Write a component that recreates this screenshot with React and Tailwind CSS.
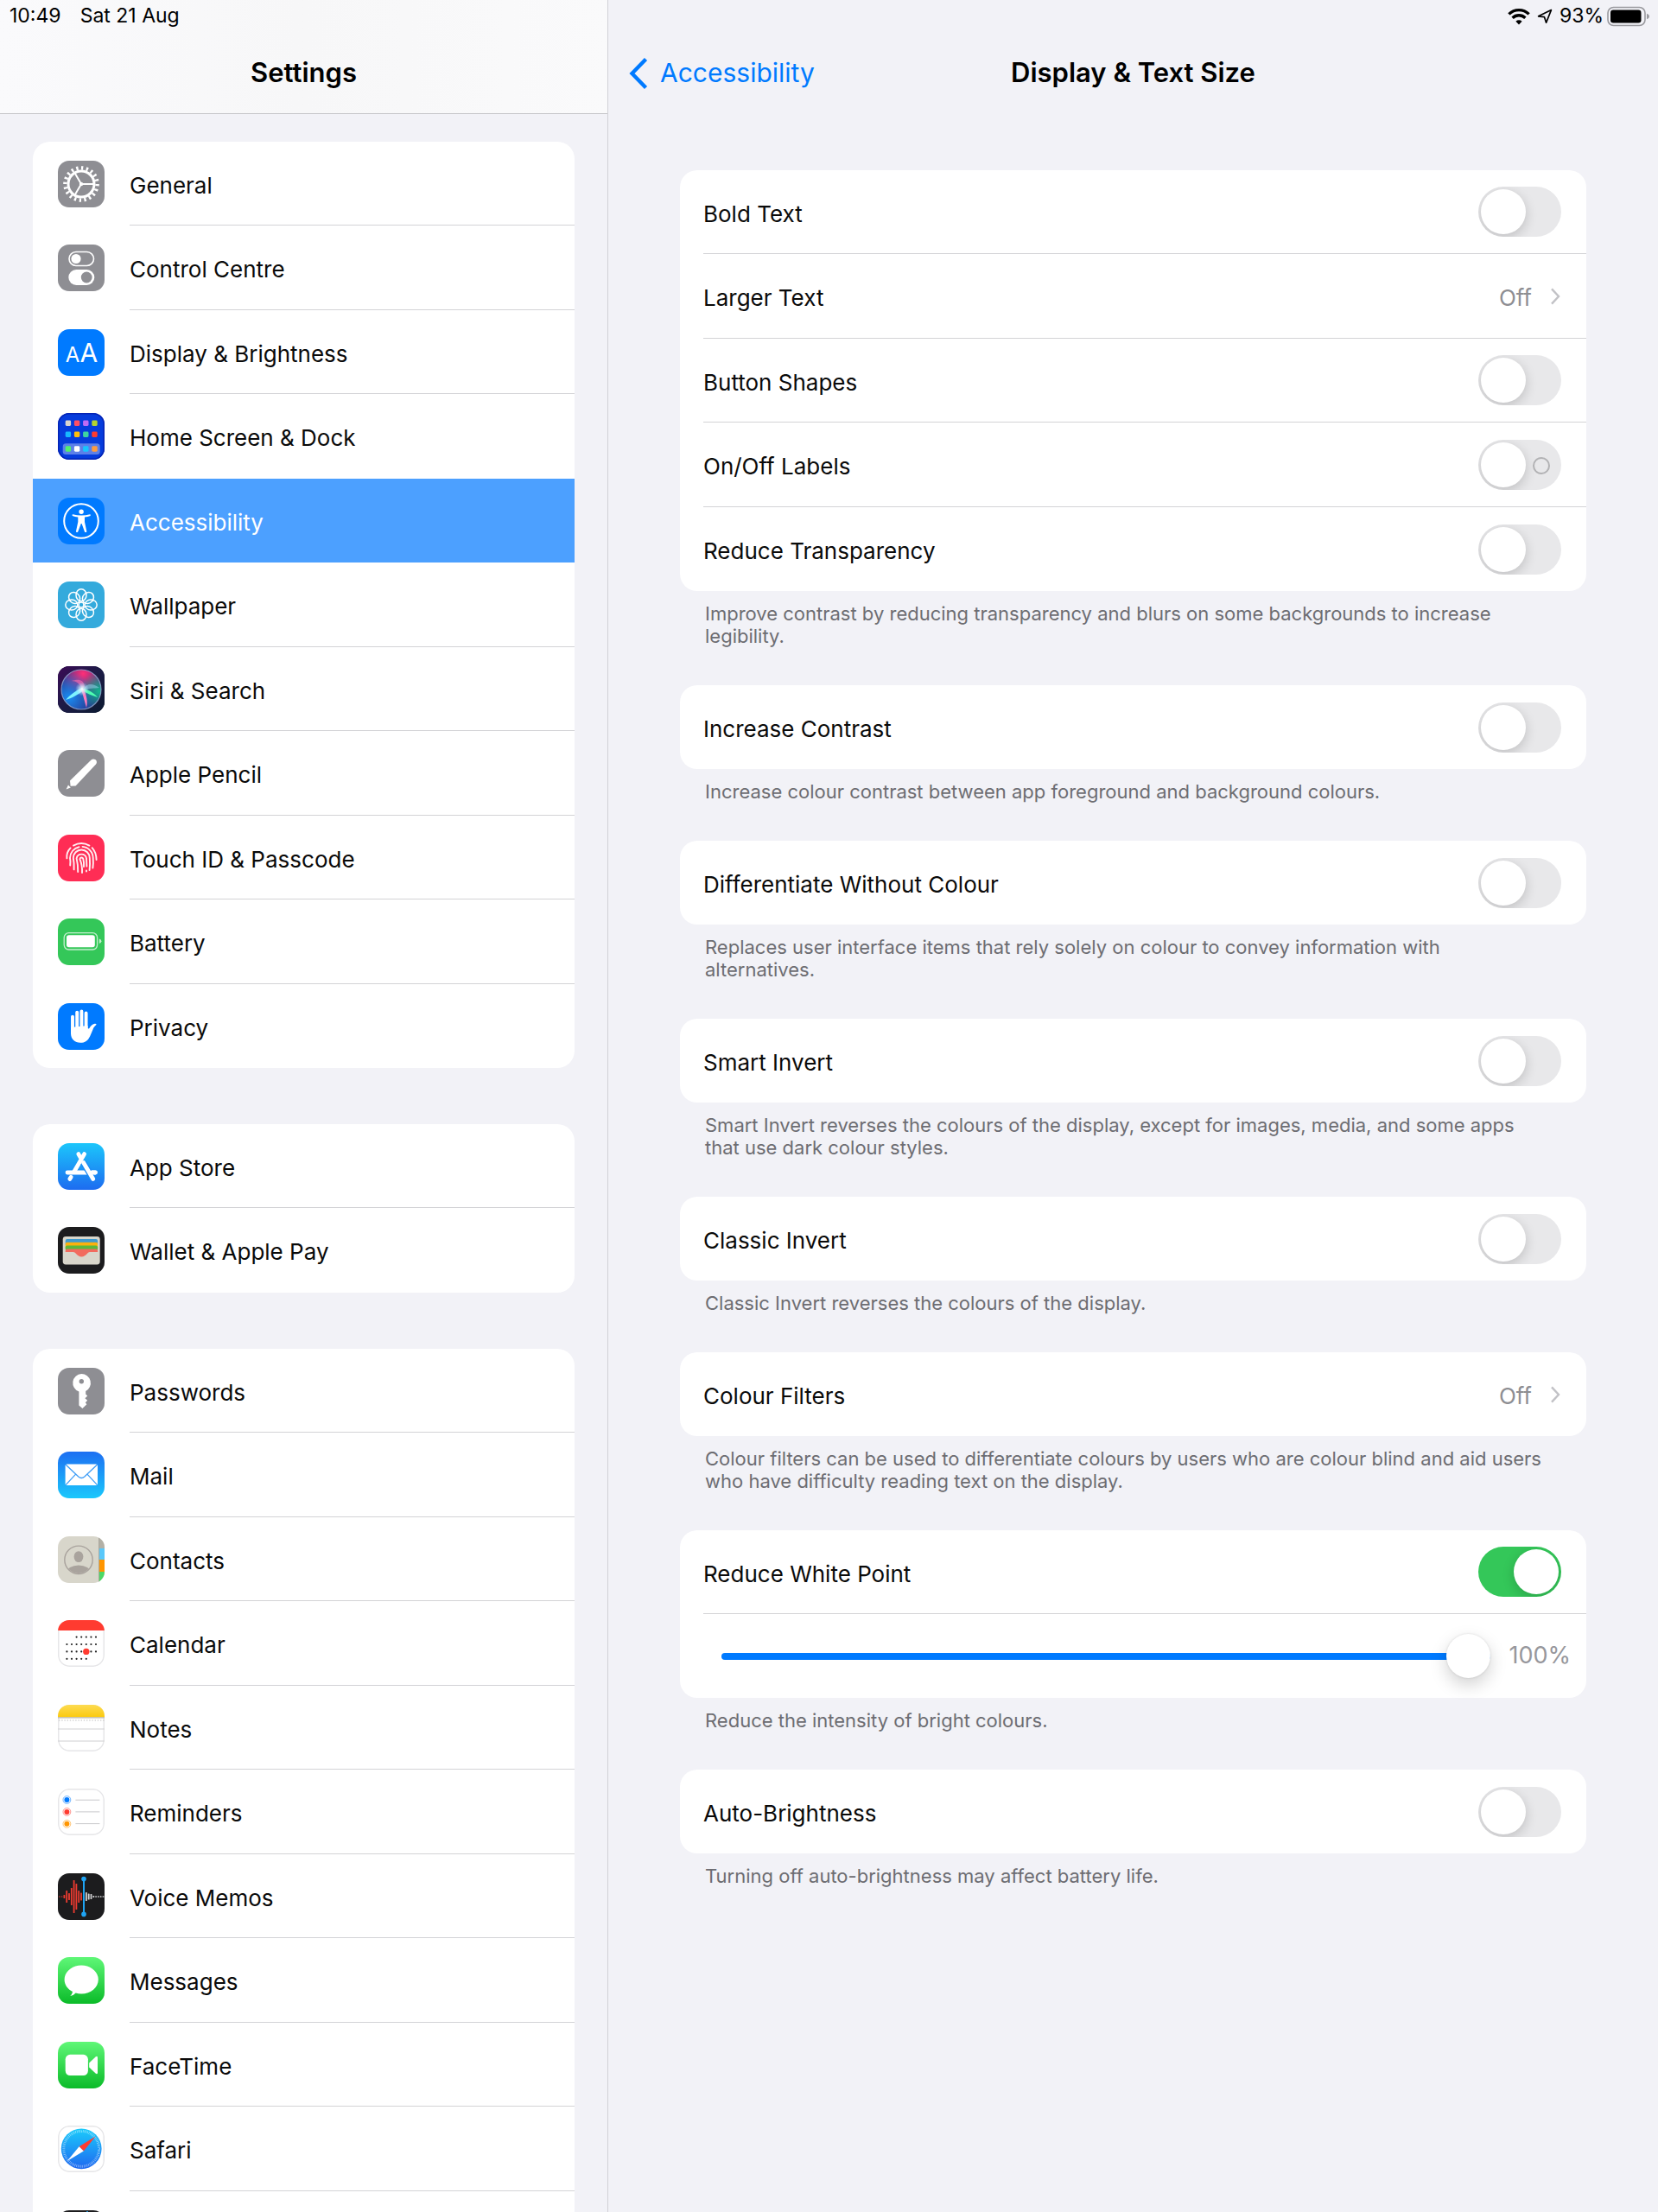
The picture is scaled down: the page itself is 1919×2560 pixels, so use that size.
import React, { useState } from "react";

/* ---------- icons ---------- */

const IconTile = ({ className = "", children }) => (
  <svg
    viewBox="0 0 54 54"
    aria-hidden="true"
    className={`size-[54px] shrink-0 rounded-[13px] ${className}`}
  >
    {children}
  </svg>
);

const Gradient = ({ id, from, to }) => (
  <defs>
    <linearGradient id={id} x1="0" y1="0" x2="0" y2="1">
      <stop offset="0" stopColor={from} />
      <stop offset="1" stopColor={to} />
    </linearGradient>
  </defs>
);

const TileBorder = () => (
  <rect x="0.75" y="0.75" width="52.5" height="52.5" rx="12.5" fill="none" stroke="#e6e6e8" strokeWidth="1.5" />
);

const GeneralIcon = () => (
  <IconTile className="bg-[#8e8e93]">
    <g fill="none" stroke="#fff">
      <circle cx="27" cy="27" r="18.6" strokeWidth="4.4" pathLength="40" strokeDasharray="0.8 1.2" />
      <circle cx="27" cy="27" r="15" strokeWidth="3" />
      <path d="M27 27H41M27 27L20 15M27 27L20 39" strokeWidth="2" />
    </g>
    <circle cx="27" cy="27" r="2.2" fill="#fff" />
  </IconTile>
);

const ControlCentreIcon = () => (
  <IconTile className="bg-[#8e8e93]">
    <rect x="13" y="8.5" width="28.5" height="16" rx="8" fill="none" stroke="#fff" strokeWidth="1.6" />
    <circle cx="21" cy="16.5" r="5.6" fill="#fff" />
    <rect x="12.3" y="29" width="30" height="18" rx="9" fill="#fff" />
    <circle cx="33.2" cy="38" r="6.4" fill="#8e8e93" />
  </IconTile>
);

const DisplayIcon = () => (
  <IconTile className="bg-[#007aff]">
    <g fill="#fff" fontFamily="Inter, sans-serif" fontWeight="400">
      <text x="8.8" y="38.3" fontSize="24">A</text>
      <text x="25.5" y="38.3" fontSize="30">A</text>
    </g>
  </IconTile>
);

const homeSquares = [
  ["#d9d5ce", "#ff4f64", "#bf6bf5", "#b4d32f"],
  ["#17b8ff", "#ffbf0a", "#3fd4a0", "#ff3b30"],
  ["#52f06c", "#ffffff", "#17c4ff", "#ff9c3f"],
];

const HomeScreenIcon = () => (
  <IconTile className="bg-[#063cdc]">
    <rect width="54" height="54" rx="13" fill="none" stroke="#0523b4" strokeWidth="3" />
    <rect x="5.7" y="35.3" width="43" height="12.6" rx="3.5" fill="#fff" fillOpacity="0.35" />
    {homeSquares.map((row, r) =>
      row.map((color, c) => (
        <rect key={color} x={8.7 + c * 10.2} y={[8.5, 21.5, 38.3][r]} width="6.4" height="6.4" rx="1.4" fill={color} />
      ))
    )}
  </IconTile>
);

const AccessibilityIcon = () => (
  <IconTile className="bg-[#007aff]">
    <circle cx="27" cy="27" r="19.8" fill="none" stroke="#fff" strokeWidth="2" />
    <circle cx="27.1" cy="16.2" r="2.7" fill="#fff" />
    <path
      d="M17.3 19.3Q22 20.6 27.2 20.6T37.1 19.3Q38.3 19.3 37.6 20.9 34.6 22.1 31 22.6V28L33.4 39.2Q32.2 40.8 31 39.5L27.6 30H26.8L23.2 39.5Q22 40.8 20.9 39.2L23.3 28V22.6Q19.8 22.1 16.8 20.9 16.1 19.3 17.3 19.3Z"
      fill="#fff"
    />
  </IconTile>
);

const WallpaperIcon = () => (
  <IconTile className="bg-[#34aadc]">
    <g fill="none" stroke="#fff" strokeWidth="1.5">
      {[0, 45, 90, 135, 180, 225, 270, 315].map((deg) => (
        <ellipse key={deg} cx="27" cy="15.8" rx="6" ry="7" transform={`rotate(${deg} 27 27)`} />
      ))}
      <circle cx="27" cy="27" r="3" />
    </g>
  </IconTile>
);

const SiriIcon = () => (
  <IconTile className="bg-[#151a3a]">
    <defs>
      <linearGradient id="siri-bg" x1="0" y1="0" x2="1" y2="1">
        <stop offset="0" stopColor="#3b0a55" />
        <stop offset="0.5" stopColor="#1c1b46" />
        <stop offset="1" stopColor="#0b1a30" />
      </linearGradient>
      <radialGradient id="siri-pink" cx="0.55" cy="0.1" r="0.6">
        <stop offset="0" stopColor="#ff2f78" />
        <stop offset="1" stopColor="#ff2f78" stopOpacity="0" />
      </radialGradient>
      <radialGradient id="siri-blue" cx="0.2" cy="0.7" r="0.65">
        <stop offset="0" stopColor="#1a8df2" />
        <stop offset="1" stopColor="#1a8df2" stopOpacity="0" />
      </radialGradient>
      <radialGradient id="siri-green" cx="0.95" cy="0.55" r="0.5">
        <stop offset="0" stopColor="#12b78c" />
        <stop offset="1" stopColor="#12b78c" stopOpacity="0" />
      </radialGradient>
      <radialGradient id="siri-core">
        <stop offset="0" stopColor="#fff" />
        <stop offset="0.4" stopColor="#d8f4ff" stopOpacity="0.7" />
        <stop offset="1" stopColor="#9fdcff" stopOpacity="0" />
      </radialGradient>
    </defs>
    <rect width="54" height="54" fill="url(#siri-bg)" />
    <circle cx="27" cy="27" r="23" fill="#2a2c86" />
    <circle cx="27" cy="27" r="23" fill="url(#siri-pink)" />
    <circle cx="27" cy="27" r="23" fill="url(#siri-blue)" />
    <circle cx="27" cy="27" r="23" fill="url(#siri-green)" />
    <circle cx="27" cy="27" r="23" fill="none" stroke="#9bb0d8" strokeOpacity="0.75" strokeWidth="1.2" />
    <path d="M28 26C25 20 21 17 16 17C22 15 30 14 31 24Z" fill="#ff6fb0" fillOpacity="0.6" />
    <path d="M30 26C33 20 40 19 48 25C42 26 36 25 30 28Z" fill="#8fd0e8" fillOpacity="0.55" />
    <path d="M28 25C21 28 14 33 9 39C17 37 24 32 30 28Z" fill="#7df3ff" />
    <path d="M29 26C35 27 42 31 46 36C39 34 33 31 28 28Z" fill="#4dffb0" />
    <path d="M27 27C29 33 31 41 33 48C35 41 33 33 30 27Z" fill="#ff7cc0" />
    <circle cx="28" cy="26.5" r="8" fill="url(#siri-core)" />
  </IconTile>
);

const PencilIcon = () => (
  <IconTile className="bg-[#8e8e93]">
    <path d="M38.5 11.6C42 8.7 47 12.6 44 16.6L20.6 41.4 14.6 41.8 14 35.6Z" fill="#fff" />
    <path d="M12 40.4L14.8 43.4 9.6 45.4Z" fill="#fff" />
  </IconTile>
);

const TouchIdIcon = () => (
  <IconTile className="bg-[#ff2d55]">
    <g fill="none" stroke="#fff" strokeWidth="1.9" strokeLinecap="round" strokeOpacity="0.92">
      <path d="M18 12.6Q27.2 7.4 36.4 12.6" />
      <path d="M14.6 15.4Q9.6 20.4 10.4 27.4" />
      <path d="M39.6 15.2Q44.4 20.4 44.6 29" />
      <path d="M14.2 35.5Q14.8 31 14 27A13.2 13.2 0 0 1 24.5 14.2" />
      <path d="M28.5 13.9A13.2 13.2 0 0 1 40.7 27Q41.2 33 40.4 38.6" />
      <path d="M18.6 40.4Q19 33 17.8 27A9.5 9.5 0 0 1 36.8 27Q37.4 34 36.6 41" />
      <path d="M23.2 43Q23.4 35 21.6 27.4A5.8 5.8 0 0 1 33 27.4L33.4 36.6M33 41.4V42.6" />
      <path d="M28 44Q28.4 35 25.4 28.4A2 2 0 0 1 29.2 27.6Q30.4 32 30 37" />
    </g>
  </IconTile>
);

const BatteryTileIcon = () => (
  <IconTile className="bg-[#34c759]">
    <rect x="7.2" y="16.6" width="38.4" height="19.4" rx="5.4" fill="none" stroke="#fff" strokeOpacity="0.7" strokeWidth="1.3" />
    <rect x="10" y="19.3" width="32.8" height="14" rx="2.8" fill="#fff" />
    <path d="M47.8 23.6Q50.4 24.4 50.4 26.3T47.8 29Z" fill="#fff" fillOpacity="0.7" />
  </IconTile>
);

const PrivacyIcon = () => (
  <IconTile className="bg-[#007aff]">
    <g stroke="#fff" strokeWidth="3.9" strokeLinecap="round">
      <path d="M17 15.6V34M22.2 10.6V30M27.4 9.4V30M32.6 11.4V32" />
    </g>
    <path
      d="M15 28V35C15 41.5 19.5 45.8 26 45.8 31.5 45.8 34.6 43.5 37.2 38.2L40.6 30.2C41.6 27.9 42.4 26.8 43.9 25.6 45.2 24.5 44.3 23.4 42.7 23.7 39.5 24.2 37.8 26.7 36.4 28.9 35.9 29.7 34.6 29.5 34.6 28.4V26Z"
      fill="#fff"
    />
  </IconTile>
);

const AppStoreIcon = () => (
  <IconTile>
    <Gradient id="appstore-bg" from="#1cc6fb" to="#1d6cf0" />
    <rect width="54" height="54" fill="url(#appstore-bg)" />
    <g fill="none" stroke="#fff" strokeWidth="4.8" strokeLinecap="round">
      <path d="M11 34H43.4" />
      <path d="M30.6 12.6L18.8 33" />
      <path d="M23.8 12.6L26 16.4" />
      <path d="M15.2 39.2L13.8 41.4" />
      <path d="M29.6 22.6L41 42" stroke="#1d8bf5" strokeWidth="7.4" strokeLinecap="butt" />
      <path d="M29.6 22.6L40.8 41.4" />
      <path d="M39.4 34H43.4" />
    </g>
  </IconTile>
);

const WalletIcon = () => (
  <IconTile className="bg-[#1c1c1e]">
    <rect x="5.7" y="11" width="43" height="32.4" rx="3.4" fill="#d9d6cb" />
    <rect x="8.7" y="14" width="37.4" height="8" rx="2" fill="#3f9bd0" />
    <rect x="8.7" y="17.8" width="37.4" height="8" rx="2" fill="#fcb10d" />
    <rect x="8.7" y="21.6" width="37.4" height="6" rx="2" fill="#5cb83b" />
    <path d="M8.7 27.4Q8.7 25.4 10.7 25.4H44.1Q46.1 25.4 46.1 27.4V29H37C34 29 32.6 34.4 27.4 34.4S21 29 17.6 29H8.7Z" fill="#f26b5e" />
  </IconTile>
);

const KeyIcon = () => (
  <IconTile className="bg-[#8e8e93]">
    <path
      fillRule="evenodd"
      d="M27.3 7A10.6 10.6 0 0 1 32.2 27V30.4L34.2 32.6 31.4 35.2 34.2 37.8 31.8 40.2 33.4 42.2 28.4 47 24.4 43.4V27.6A10.6 10.6 0 0 1 27.3 7ZM27.3 13A2.7 2.7 0 1 0 27.3 18.4 2.7 2.7 0 1 0 27.3 13Z"
      fill="#fff"
    />
  </IconTile>
);

const MailIcon = () => (
  <IconTile>
    <Gradient id="mail-bg" from="#1d6ff2" to="#1ac8fc" />
    <rect width="54" height="54" fill="url(#mail-bg)" />
    <rect x="8.6" y="14.4" width="37.4" height="24.6" rx="1.8" fill="#fff" />
    <path d="M9 15L23.8 29Q27.3 32 30.8 29L45.6 15M9 38.6L20.4 26.4M45.6 38.6L34.2 26.4" fill="none" stroke="#3f9df6" strokeWidth="1.3" />
  </IconTile>
);

const ContactsIcon = () => (
  <IconTile className="bg-[#d8d6cb]">
    <rect x="47.6" width="6.4" height="14" fill="#b3b0a6" />
    <rect x="47.6" y="14" width="6.4" height="13" fill="#5ac8fa" />
    <rect x="47.6" y="27" width="6.4" height="14" fill="#ff9500" />
    <rect x="47.6" y="41" width="6.4" height="13" fill="#4cd964" />
    <path d="M47.6 0V54" stroke="#a09d94" strokeWidth="0.8" />
    <clipPath id="contact-clip">
      <circle cx="24" cy="27.3" r="15.6" />
    </clipPath>
    <g fill="#a9a39d">
      <ellipse cx="24" cy="23.6" rx="5.4" ry="6.4" />
      <ellipse cx="24" cy="42" rx="14" ry="8.6" clipPath="url(#contact-clip)" />
    </g>
    <circle cx="24" cy="27.3" r="16.2" fill="none" stroke="#a9a39d" strokeWidth="1.4" />
  </IconTile>
);

const calendarRows = [
  [2, 3, 4, 5, 6],
  [0, 1, 2, 3, 4, 5, 6],
  [0, 1, 2, 3, 4, 5, 6],
  [0, 1, 2, 3, 4],
];

const CalendarIcon = () => (
  <IconTile className="bg-white">
    <TileBorder />
    <rect width="54" height="12" fill="#ff3b30" />
    {calendarRows.map((cols, r) =>
      cols.map((c) => <circle key={`${r}-${c}`} cx={10.4 + c * 5.6} cy={19.6 + r * 8.4} r="1.1" fill="#222" />)
    )}
    <circle cx="32.8" cy="36.4" r="3.7" fill="#ff3b30" />
  </IconTile>
);

const NotesIcon = () => (
  <IconTile className="bg-white">
    <Gradient id="notes-top" from="#fddb52" to="#fbca0f" />
    <TileBorder />
    <rect width="54" height="14.2" fill="url(#notes-top)" />
    <path d="M0 14.8H54" stroke="#b8b49f" strokeWidth="1.2" />
    <path d="M1 18H54" stroke="#bdbdbd" strokeWidth="1" strokeDasharray="1.4 1.8" />
    <path d="M0 28H54M0 42H54" stroke="#cfcfd1" strokeWidth="1.2" />
  </IconTile>
);

const RemindersIcon = () => (
  <IconTile className="bg-white">
    <TileBorder />
    {["#007aff", "#ff3b30", "#ff9500"].map((color, i) => (
      <g key={color}>
        <circle cx="10.4" cy={13 + i * 13.9} r="3" fill={color} />
        <circle cx="10.4" cy={13 + i * 13.9} r="4.4" fill="none" stroke={color} strokeOpacity="0.7" strokeWidth="0.8" />
        <path d={`M20.4 ${13.2 + i * 13.7}H48.4`} stroke="#c9c9cc" strokeWidth="1" />
      </g>
    ))}
  </IconTile>
);

const waveBars = [1, 1, 4, 14, 8, 20, 38, 30, 14, 9];
const quietBars = [10, 7, 6, 2, 1.5, 1.5, 1.5, 1.5];

const VoiceMemosIcon = () => (
  <IconTile className="bg-[#1c1c1e]">
    {waveBars.map((h, i) => (
      <rect key={i} x={0.9 + i * 2.8} y={27 - h / 2} width="1.8" height={h} rx="0.6" fill="#ed3b30" />
    ))}
    {quietBars.map((h, i) => (
      <rect key={i} x={32 + i * 2.8} y={27 - h / 2} width="1.8" height={h} rx="0.6" fill="#d0d0d2" />
    ))}
    <path d="M30 6.6V47.4" stroke="#1fa4f4" strokeWidth="2" />
    <circle cx="30" cy="6.6" r="2.8" fill="#1fa4f4" />
    <circle cx="30" cy="47.4" r="2.8" fill="#1fa4f4" />
  </IconTile>
);

const MessagesIcon = () => (
  <IconTile>
    <Gradient id="messages-bg" from="#5ff777" to="#0bbb29" />
    <rect width="54" height="54" fill="url(#messages-bg)" />
    <path
      d="M27.2 9.4C38 9.4 46.8 16.7 46.8 25.9S38 42.4 27.2 42.4C24.8 42.4 22.6 42.1 20.6 41.5 18.8 43.5 16.6 44.7 14.2 45 15.8 43.6 16.8 41.6 17 39.9 11.2 37 7.6 31.8 7.6 25.9 7.6 16.7 16.4 9.4 27.2 9.4Z"
      fill="#fff"
    />
  </IconTile>
);

const FaceTimeIcon = () => (
  <IconTile>
    <Gradient id="facetime-bg" from="#5ff777" to="#0bbb29" />
    <rect width="54" height="54" fill="url(#facetime-bg)" />
    <rect x="8.7" y="14.8" width="26.2" height="24.2" rx="5.4" fill="#fff" />
    <path d="M36.2 24.4L43.6 17.4Q46 15.8 46 18.4V35.6Q46 38.2 43.6 36.6L36.2 29.6Z" fill="#fff" />
  </IconTile>
);

const SafariIcon = () => (
  <IconTile className="bg-white">
    <Gradient id="safari-bg" from="#1bcbfb" to="#1e68f0" />
    <TileBorder />
    <circle cx="27.2" cy="26.8" r="23.4" fill="url(#safari-bg)" />
    <circle cx="27.2" cy="26.8" r="20.4" fill="none" stroke="#fff" strokeOpacity="0.6" strokeWidth="3" pathLength="144" strokeDasharray="0.7 1.3" />
    <path d="M43.6 12.6L24.6 24.2 29.8 29.4Z" fill="#ff3b30" />
    <path d="M10.8 41L24.6 24.2 29.8 29.4Z" fill="#fff" />
  </IconTile>
);

const StocksIcon = () => (
  <IconTile className="bg-[#1c1c1e]">
    <path d="M4 40L14 30 22 35 32 20 40 26 50 14" fill="none" stroke="#fff" strokeWidth="2" />
    <path d="M34 1V53" stroke="#1fa4f4" strokeWidth="1.6" />
  </IconTile>
);

const WifiIcon = () => (
  <svg viewBox="0 0 26 20" aria-hidden="true" className="h-5 w-[26px]">
    <g fill="none" stroke="#000" strokeWidth="3.4">
      <path d="M1.4 7.4A16.6 16.6 0 0 1 24.6 7.4" />
      <path d="M5.6 11.8A10.6 10.6 0 0 1 20.4 11.8" />
    </g>
    <path d="M13 19.4L9.4 15.8A5.2 5.2 0 0 1 16.6 15.8Z" />
  </svg>
);

const LocationIcon = () => (
  <svg viewBox="0 0 18 18" aria-hidden="true" className="size-[18px]">
    <path d="M16.4 1.6L1.6 8.8 8.4 9.6 10.6 16.2Z" fill="none" stroke="#000" strokeWidth="1.7" strokeLinejoin="round" />
  </svg>
);

const StatusBatteryIcon = () => (
  <svg viewBox="0 0 50 24" aria-hidden="true" className="h-6 w-[50px]">
    <rect x="1" y="1.5" width="43" height="21" rx="6.5" fill="none" stroke="#9a9a9f" strokeWidth="1.6" />
    <rect x="4" y="4.5" width="35.5" height="15" rx="3.2" />
    <path d="M46 8.8Q49 9.8 49 12T46 15.2Z" fill="#9a9a9f" />
  </svg>
);

const ChevronIcon = () => (
  <svg viewBox="0 0 12 20" aria-hidden="true" className="h-5 w-3">
    <path d="M1 1.4L9 10 1 18.6" fill="none" stroke="#c2c2c6" strokeWidth="2.4" />
  </svg>
);

/* ---------- data ---------- */

const sidebarGroups = [
  [
    { label: "General", Icon: GeneralIcon },
    { label: "Control Centre", Icon: ControlCentreIcon },
    { label: "Display & Brightness", Icon: DisplayIcon },
    { label: "Home Screen & Dock", Icon: HomeScreenIcon },
    { label: "Accessibility", Icon: AccessibilityIcon },
    { label: "Wallpaper", Icon: WallpaperIcon },
    { label: "Siri & Search", Icon: SiriIcon },
    { label: "Apple Pencil", Icon: PencilIcon },
    { label: "Touch ID & Passcode", Icon: TouchIdIcon },
    { label: "Battery", Icon: BatteryTileIcon },
    { label: "Privacy", Icon: PrivacyIcon },
  ],
  [
    { label: "App Store", Icon: AppStoreIcon },
    { label: "Wallet & Apple Pay", Icon: WalletIcon },
  ],
  [
    { label: "Passwords", Icon: KeyIcon },
    { label: "Mail", Icon: MailIcon },
    { label: "Contacts", Icon: ContactsIcon },
    { label: "Calendar", Icon: CalendarIcon },
    { label: "Notes", Icon: NotesIcon },
    { label: "Reminders", Icon: RemindersIcon },
    { label: "Voice Memos", Icon: VoiceMemosIcon },
    { label: "Messages", Icon: MessagesIcon },
    { label: "FaceTime", Icon: FaceTimeIcon },
    { label: "Safari", Icon: SafariIcon },
    { label: "Stocks", Icon: StocksIcon, iconOnly: true },
  ],
];

const settingGroups = [
  {
    rows: [
      { id: "bold-text", label: "Bold Text", type: "switch" },
      { id: "larger-text", label: "Larger Text", type: "link", value: "Off" },
      { id: "button-shapes", label: "Button Shapes", type: "switch" },
      { id: "on-off-labels", label: "On/Off Labels", type: "switch", marked: true },
      { id: "reduce-transparency", label: "Reduce Transparency", type: "switch" },
    ],
    note: "Improve contrast by reducing transparency and blurs on some backgrounds to increase legibility.",
  },
  {
    rows: [{ id: "increase-contrast", label: "Increase Contrast", type: "switch" }],
    note: "Increase colour contrast between app foreground and background colours.",
  },
  {
    rows: [{ id: "differentiate", label: "Differentiate Without Colour", type: "switch" }],
    note: "Replaces user interface items that rely solely on colour to convey information with alternatives.",
  },
  {
    rows: [{ id: "smart-invert", label: "Smart Invert", type: "switch" }],
    note: "Smart Invert reverses the colours of the display, except for images, media, and some apps that use dark colour styles.",
  },
  {
    rows: [{ id: "classic-invert", label: "Classic Invert", type: "switch" }],
    note: "Classic Invert reverses the colours of the display.",
  },
  {
    rows: [{ id: "colour-filters", label: "Colour Filters", type: "link", value: "Off" }],
    note: "Colour filters can be used to differentiate colours by users who are colour blind and aid users who have difficulty reading text on the display.",
  },
  {
    rows: [
      { id: "reduce-white-point", label: "Reduce White Point", type: "switch" },
      { id: "white-point-level", label: "White point level", type: "slider" },
    ],
    note: "Reduce the intensity of bright colours.",
  },
  {
    rows: [{ id: "auto-brightness", label: "Auto-Brightness", type: "switch" }],
    note: "Turning off auto-brightness may affect battery life.",
  },
];

/* ---------- sidebar ---------- */

const SidebarRow = ({ item, active, beforeActive, last, onSelect }) => {
  const { label, Icon, iconOnly } = item;
  const line = active || beforeActive || last ? "border-transparent" : "border-[#d3d3d6]";

  return (
    <li className={`flex h-[97px] even:h-[98px] ${active ? "bg-[#4ca0ff]" : ""}`}>
      <a
        href={`#${label.toLowerCase().replace(/[^a-z]+/g, "-")}`}
        onClick={onSelect}
        aria-current={active ? "page" : undefined}
        aria-label={iconOnly ? label : undefined}
        className="flex flex-1 items-center gap-[29px] pl-[29px]"
      >
        <Icon />
        <span
          className={`flex flex-1 items-center self-stretch border-b pt-1 text-[26px] ${line} ${
            active ? "text-white" : "text-[#0a0a0a]"
          }`}
        >
          {!iconOnly && label}
        </span>
      </a>
    </li>
  );
};

const Sidebar = () => {
  const [selected, setSelected] = useState("Accessibility");

  return (
    <aside className="flex w-[704px] shrink-0 flex-col border-r border-[#d1d1d6]">
      <header className="shrink-0 border-b border-[#c6c6c9] bg-linear-to-r from-[#fafafc] via-[#f7f7f8] to-[#fafafb]">
        <div className="flex h-[37px] items-center gap-[22px] pl-[11px] text-[23px]">
          <span>10:49</span>
          <span>Sat 21 Aug</span>
        </div>
        <h1 className="flex h-[94px] items-center justify-center text-[31px] font-semibold">Settings</h1>
      </header>
      <nav className="flex flex-1 flex-col gap-[65px] overflow-hidden px-[38px] pt-8">
        {sidebarGroups.map((group, g) => (
          <ul key={g} className="shrink-0 overflow-hidden rounded-[20px] bg-white">
            {group.map((item, i) => (
              <SidebarRow
                key={item.label}
                item={item}
                active={item.label === selected}
                beforeActive={group[i + 1]?.label === selected}
                last={i === group.length - 1}
                onSelect={() => setSelected(item.label)}
              />
            ))}
          </ul>
        ))}
      </nav>
    </aside>
  );
};

/* ---------- settings panel ---------- */

const Switch = ({ id, checked, marked, onChange }) => (
  <input
    id={id}
    type="checkbox"
    role="switch"
    checked={checked}
    onChange={onChange}
    className={`relative h-[58px] w-24 shrink-0 cursor-pointer appearance-none overflow-hidden rounded-full bg-[#e8e8ea] transition-colors before:absolute before:top-[3px] before:left-[3px] before:size-[52px] before:rounded-full before:bg-white before:shadow-[0_4px_14px_rgba(0,0,0,0.18)] checked:bg-[#34c759] checked:before:left-[41px] ${
      marked
        ? "after:absolute after:top-5 after:right-[13px] after:size-5 after:rounded-full after:border-2 after:border-[#b2b2b4] checked:after:hidden"
        : ""
    }`}
  />
);

const SettingRow = ({ row, last, checked, onToggle, level, onLevel }) => {
  const line = last ? "" : "border-b border-[#d3d3d6]";

  if (row.type === "slider") {
    return (
      <div className="flex h-[97px] items-center gap-[21px] pr-[18px] pl-12">
        <input
          type="range"
          min="0"
          max="100"
          aria-label={row.label}
          value={level}
          onChange={(e) => onLevel(Number(e.target.value))}
          style={{
            backgroundImage: `linear-gradient(to right, #007aff ${level}%, #e4e4e6 ${level}%)`,
          }}
          className="h-2 min-w-0 flex-1 appearance-none rounded-full [&::-webkit-slider-thumb]:size-[51px] [&::-webkit-slider-thumb]:appearance-none [&::-webkit-slider-thumb]:rounded-full [&::-webkit-slider-thumb]:bg-white [&::-webkit-slider-thumb]:shadow-[0_8px_20px_rgba(0,0,0,0.18),0_0_3px_rgba(0,0,0,0.12)]"
        />
        <span className="text-[27px] text-[#97979c]">{level}%</span>
      </div>
    );
  }

  return (
    <div className="flex h-[97px] pl-[27px] even:h-[98px]">
      <div className={`flex flex-1 items-center justify-between pr-[29px] ${line}`}>
        {row.type === "switch" ? (
          <>
            <label htmlFor={row.id} className="flex-1 pt-1 text-[26px] text-[#0a0a0a]">
              {row.label}
            </label>
            <Switch id={row.id} checked={checked} marked={row.marked} onChange={onToggle} />
          </>
        ) : (
          <a href={`#${row.id}`} className="flex flex-1 items-center text-[26px] text-[#0a0a0a]">
            <span className="flex-1 pt-1">{row.label}</span>
            <span className="mr-[22px] pt-1 text-[#8e8e93]">{row.value}</span>
            <ChevronIcon />
          </a>
        )}
      </div>
    </div>
  );
};

const DisplayTextSize = () => {
  const [switches, setSwitches] = useState({ "reduce-white-point": true });
  const [level, setLevel] = useState(100);

  const toggle = (id) => setSwitches((prev) => ({ ...prev, [id]: !prev[id] }));

  return (
    <main className="flex min-w-0 flex-1 flex-col">
      <header className="shrink-0">
        <div className="flex h-[37px] items-center justify-end pr-[9px] text-[23px]">
          <WifiIcon />
          <span className="mx-2">
            <LocationIcon />
          </span>
          <span className="mr-1">93%</span>
          <StatusBatteryIcon />
        </div>
        <div className="grid h-[95px] grid-cols-[1fr_auto_1fr] items-center px-6">
          <a href="#accessibility" className="flex items-center gap-[14px] text-[30px] text-[#007aff]">
            <svg viewBox="0 0 22 38" aria-hidden="true" className="h-[38px] w-[22px]">
              <path d="M19.5 2.5L3.5 19 19.5 35.5" fill="none" stroke="#007aff" strokeWidth="4.4" />
            </svg>
            Accessibility
          </a>
          <h2 className="text-[31px] font-semibold">Display & Text Size</h2>
        </div>
      </header>

      <div className="flex-1 overflow-hidden px-[83px] pt-[65px]">
        {settingGroups.map((group) => (
          <section key={group.note} className="pb-11">
            <div className="rounded-[20px] bg-white">
              {group.rows.map((row, i) => (
                <SettingRow
                  key={row.id}
                  row={row}
                  last={i === group.rows.length - 1}
                  checked={!!switches[row.id]}
                  onToggle={() => toggle(row.id)}
                  level={level}
                  onLevel={setLevel}
                />
              ))}
            </div>
            <p className="pt-[13px] pr-[45px] pl-[29px] text-[22px] leading-[26px] text-[#6d6d72]">{group.note}</p>
          </section>
        ))}
      </div>
    </main>
  );
};

const App = () => (
  <div className="flex h-screen overflow-hidden bg-[#f2f2f7] font-[Inter,sans-serif] text-black">
    <Sidebar />
    <DisplayTextSize />
  </div>
);

export default App;
